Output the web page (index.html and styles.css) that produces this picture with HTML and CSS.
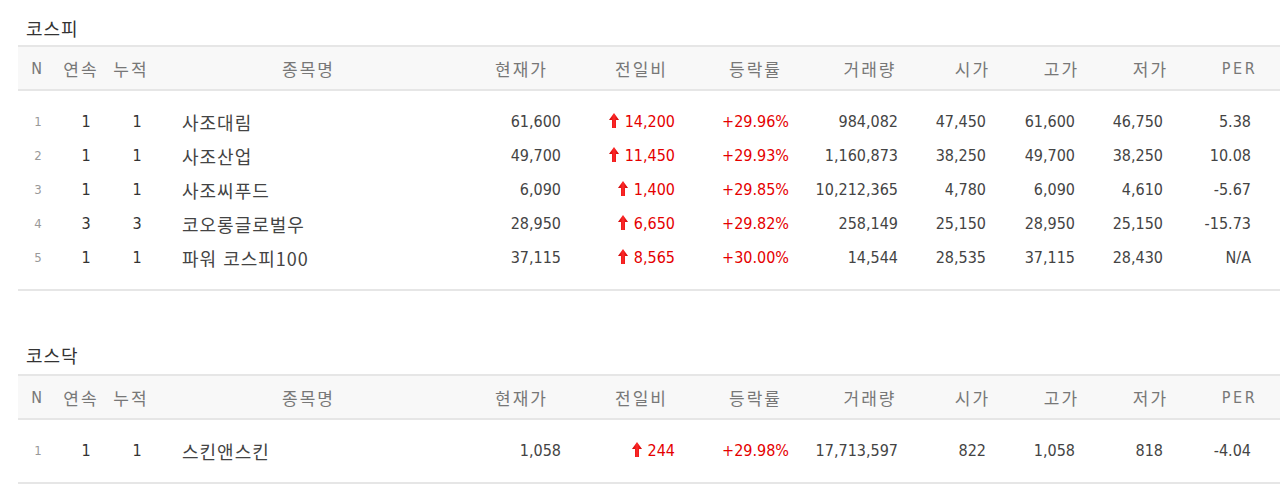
FILE: index.html
```html
<!DOCTYPE html>
<html lang="ko">
<head>
<meta charset="utf-8">
<title>상한가 종목</title>
<link rel="stylesheet" href="styles.css">
</head>
<body>
<svg class="defs" width="0" height="0" aria-hidden="true">
  <defs>
    <linearGradient id="upg" x1="0" y1="0" x2="1" y2="0">
      <stop offset="0" stop-color="#c80000"/>
      <stop offset="0.5" stop-color="#ff2a2a"/>
      <stop offset="1" stop-color="#c80000"/>
    </linearGradient>
    <symbol id="up" viewBox="0 0 10 15">
      <path d="M5 0 L10 7 L7 7 L7 15 L3 15 L3 7 L0 7 Z" fill="url(#upg)"/>
    </symbol>
  </defs>
</svg>
<div class="page">
  <section class="market">
    <h2 class="title">코스피</h2>
    <table class="tbl">
      <colgroup>
        <col class="c-n"><col class="c-a"><col class="c-b"><col class="c-name">
        <col class="c-price"><col class="c-diff"><col class="c-rate"><col class="c-vol">
        <col class="c-s"><col class="c-s"><col class="c-s"><col class="c-s">
      </colgroup>
      <thead>
        <tr>
          <th class="lat">N</th><th>연속</th><th>누적</th><th>종목명</th>
          <th>현재가</th><th>전일비</th><th>등락률</th><th>거래량</th>
          <th>시가</th><th>고가</th><th>저가</th><th class="lat">PER</th>
        </tr>
      </thead>
      <tbody>
        <tr>
          <td class="no">1</td><td class="a">1</td><td class="b">1</td><td class="name">사조대림</td>
          <td class="price">61,600</td><td class="diff up"><svg class="arrow"><use href="#up"/></svg>14,200</td><td class="rate up">+29.96%</td><td class="vol">984,082</td>
          <td class="s1">47,450</td><td class="s2">61,600</td><td class="s3">46,750</td><td class="s4">5.38</td>
        </tr>
        <tr>
          <td class="no">2</td><td class="a">1</td><td class="b">1</td><td class="name">사조산업</td>
          <td class="price">49,700</td><td class="diff up"><svg class="arrow"><use href="#up"/></svg>11,450</td><td class="rate up">+29.93%</td><td class="vol">1,160,873</td>
          <td class="s1">38,250</td><td class="s2">49,700</td><td class="s3">38,250</td><td class="s4">10.08</td>
        </tr>
        <tr>
          <td class="no">3</td><td class="a">1</td><td class="b">1</td><td class="name">사조씨푸드</td>
          <td class="price">6,090</td><td class="diff up"><svg class="arrow"><use href="#up"/></svg>1,400</td><td class="rate up">+29.85%</td><td class="vol">10,212,365</td>
          <td class="s1">4,780</td><td class="s2">6,090</td><td class="s3">4,610</td><td class="s4">-5.67</td>
        </tr>
        <tr>
          <td class="no">4</td><td class="a">3</td><td class="b">3</td><td class="name">코오롱글로벌우</td>
          <td class="price">28,950</td><td class="diff up"><svg class="arrow"><use href="#up"/></svg>6,650</td><td class="rate up">+29.82%</td><td class="vol">258,149</td>
          <td class="s1">25,150</td><td class="s2">28,950</td><td class="s3">25,150</td><td class="s4">-15.73</td>
        </tr>
        <tr>
          <td class="no">5</td><td class="a">1</td><td class="b">1</td><td class="name">파워 코스피100</td>
          <td class="price">37,115</td><td class="diff up"><svg class="arrow"><use href="#up"/></svg>8,565</td><td class="rate up">+30.00%</td><td class="vol">14,544</td>
          <td class="s1">28,535</td><td class="s2">37,115</td><td class="s3">28,430</td><td class="s4">N/A</td>
        </tr>
      </tbody>
    </table>
  </section>

  <section class="market">
    <h2 class="title">코스닥</h2>
    <table class="tbl">
      <colgroup>
        <col class="c-n"><col class="c-a"><col class="c-b"><col class="c-name">
        <col class="c-price"><col class="c-diff"><col class="c-rate"><col class="c-vol">
        <col class="c-s"><col class="c-s"><col class="c-s"><col class="c-s">
      </colgroup>
      <thead>
        <tr>
          <th class="lat">N</th><th>연속</th><th>누적</th><th>종목명</th>
          <th>현재가</th><th>전일비</th><th>등락률</th><th>거래량</th>
          <th>시가</th><th>고가</th><th>저가</th><th class="lat">PER</th>
        </tr>
      </thead>
      <tbody>
        <tr>
          <td class="no">1</td><td class="a">1</td><td class="b">1</td><td class="name">스킨앤스킨</td>
          <td class="price">1,058</td><td class="diff up"><svg class="arrow"><use href="#up"/></svg>244</td><td class="rate up">+29.98%</td><td class="vol">17,713,597</td>
          <td class="s1">822</td><td class="s2">1,058</td><td class="s3">818</td><td class="s4">-4.04</td>
        </tr>
      </tbody>
    </table>
  </section>
</div>
</body>
</html>
```

FILE: styles.css
```css
html, body {
  margin: 0;
  padding: 0;
  background: #fff;
}

body {
  font-family: "DejaVu Sans Condensed", "DejaVu Sans", "Noto Sans CJK KR", sans-serif;
  font-stretch: condensed;
  color: #444;
  overflow: hidden;
}

.defs {
  display: block;
  width: 0;
  height: 0;
  overflow: hidden;
}

.page {
  padding-left: 18px;
  overflow: hidden;
}

.market + .market {
  margin-top: 36px;
}

.title {
  margin: 0 0 5px 8px;
  padding-top: 16px;
  font-family: "Noto Sans CJK KR", sans-serif;
  font-size: 18px;
  font-weight: 400;
  letter-spacing: 1px;
  line-height: 24px;
  color: #333;
}

.market + .market .title {
  margin-bottom: 7px;
}

.tbl {
  width: 1266px;
  table-layout: fixed;
  border-collapse: collapse;
  border-bottom: 2px solid #e6e6e6;
}

.c-n { width: 40px; }
.c-a { width: 46px; }
.c-b { width: 54px; }
.c-name { width: 301px; }
.c-price { width: 125px; }
.c-diff { width: 115px; }
.c-rate { width: 113px; }
.c-vol { width: 116px; }
.c-s { width: 89px; }

.tbl thead tr {
  background: #f8f8f8;
  border-top: 2px solid #e6e6e6;
  border-bottom: 2px solid #e6e6e6;
}

.tbl th {
  height: 42px;
  padding: 0;
  font-family: "Noto Sans CJK KR", sans-serif;
  font-size: 17px;
  font-weight: 400;
  letter-spacing: 2px;
  color: #777;
  text-align: center;
  vertical-align: middle;
}

.tbl th.lat {
  font-family: "DejaVu Sans Condensed", "DejaVu Sans", sans-serif;
  font-size: 16px;
  letter-spacing: 2.5px;
}

.tbl td {
  height: 34px;
  padding: 0;
  font-size: 16px;
  line-height: 20px;
  white-space: nowrap;
  vertical-align: middle;
  text-align: right;
}

.tbl tbody tr:first-child td {
  padding-top: 14px;
}

.tbl tbody tr:last-child td {
  padding-bottom: 14px;
}

.tbl td.no {
  text-align: center;
  font-size: 13px;
  color: #999;
}

.tbl td.a {
  text-align: center;
  padding-left: 10px;
  color: #333;
}

.tbl td.b {
  text-align: center;
  padding-left: 12px;
  color: #333;
}

.tbl td.name {
  text-align: left;
  padding-left: 24px;
  font-family: "Noto Sans CJK KR", sans-serif;
  font-size: 18px;
  letter-spacing: 1px;
  color: #444;
}

.tbl td.price { padding-right: 23px; }
.tbl td.diff { padding-right: 24px; }
.tbl td.rate { padding-right: 23px; }
.tbl td.vol { padding-right: 30px; }
.tbl td.s1 { padding-right: 31px; }
.tbl td.s2 { padding-right: 31px; }
.tbl td.s3 { padding-right: 32px; }
.tbl td.s4 { padding-right: 33px; }

.up {
  color: #e50000;
}

.arrow {
  display: inline-block;
  width: 10px;
  height: 15px;
  margin-right: 6px;
  vertical-align: -1px;
}
```
